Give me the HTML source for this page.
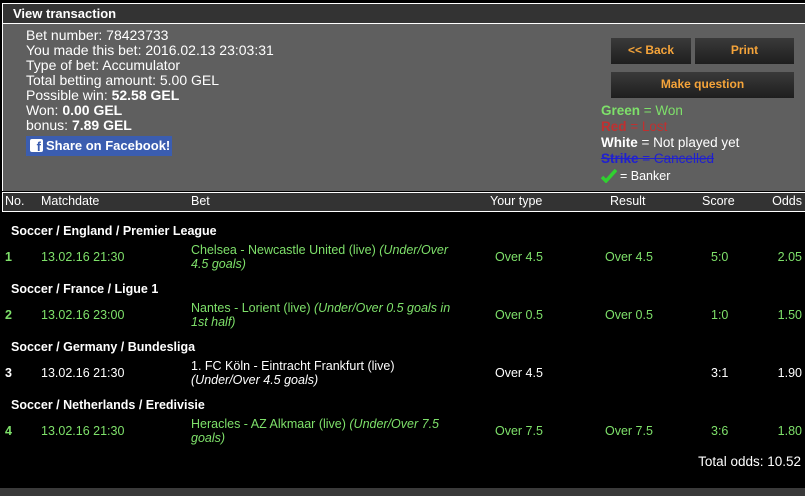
<!DOCTYPE html>
<html><head><style>
*{margin:0;padding:0;box-sizing:border-box}
body{width:805px;height:496px;background:#000;font-family:"Liberation Sans",sans-serif;position:relative;overflow:hidden;color:#fff}
.a{position:absolute;white-space:nowrap}
#title{left:2px;top:3px;width:803px;height:21px;background:#333;border:1px solid #fff;border-right:none;font-weight:bold;font-size:13px;padding:2px 0 0 10px}
#panel{left:2px;top:24px;width:803px;height:167px;background:#5f5f5f;border-left:1px solid #fff}
.info{font-size:14px;color:#fff;line-height:15px}
.btn{position:absolute;background:linear-gradient(#3a3a3a,#1e1e1e);color:#f5a43a;font-weight:bold;font-size:12px;text-align:center;line-height:25px}
#hdr{left:2px;top:192px;width:803px;height:20px;background:#333;border:1px solid #fff;border-right:none}
.h{font-size:12.5px;top:194px}
.sec{font-size:12.5px;font-weight:bold}
.g{color:#7ee06a}
.t{font-size:12.5px}
.lg{font-size:13.5px}
</style></head><body>
<div class="a" id="title">View transaction</div>
<div class="a" id="panel"></div>
<div class="a info" style="left:26px;top:28px">Bet number: 78423733<br>You made this bet: 2016.02.13 23:03:31<br>Type of bet: Accumulator<br>Total betting amount: 5.00 GEL<br>Possible win: <b>52.58 GEL</b><br>Won: <b>0.00 GEL</b><br>bonus: <b>7.89 GEL</b></div>
<div class="a" style="left:26px;top:136px;width:146px;height:20px;background:#3b5db0;font-size:13px;font-weight:bold;line-height:20px;padding-left:20px">Share on Facebook!</div>
<div class="a" style="left:30px;top:139px;width:13px;height:13px;background:#fff;border-radius:2px;color:#3b5db0;font-weight:bold;font-size:13px;line-height:15px;text-align:right;padding-right:2px;overflow:hidden">f</div>
<div class="btn" style="left:611px;top:38px;width:80px;height:26px">&lt;&lt; Back</div>
<div class="btn" style="left:695px;top:38px;width:99px;height:26px">Print</div>
<div class="btn" style="left:611px;top:72px;width:183px;height:26px">Make question</div>
<div class="a lg" style="left:601px;top:103px"><b class="g">Green</b><span class="g"> = Won</span></div>
<div class="a lg" style="left:601px;top:119px;color:#c03030"><b>Red</b> = Lost</div>
<div class="a lg" style="left:601px;top:135px"><b>White</b> = Not played yet</div>
<div class="a lg" style="left:601px;top:151px;color:#2020d0;text-decoration:line-through"><b>Strike</b> = Cancelled</div>
<svg class="a" style="left:601px;top:169px" width="16" height="14"><path d="M1 8 L5 12 L15 1" stroke="#30d030" stroke-width="3.5" fill="none"/></svg>
<div class="a" style="left:620px;top:169px;font-size:12.5px">= Banker</div>
<div class="a" id="hdr"></div>
<div class="a h" style="left:5px">No.</div>
<div class="a h" style="left:41px">Matchdate</div>
<div class="a h" style="left:191px">Bet</div>
<div class="a h" style="left:490px">Your type</div>
<div class="a h" style="left:610px">Result</div>
<div class="a h" style="left:702px">Score</div>
<div class="a h" style="right:3px">Odds</div>

<div class="a sec" style="left:11px;top:224px">Soccer / England / Premier League</div>
<div class="a t g" style="left:5px;top:250px;font-weight:bold">1</div>
<div class="a t g" style="left:41px;top:250px">13.02.16 21:30</div>
<div class="a t g" style="left:191px;top:243px;line-height:14px">Chelsea - Newcastle United (live) <i>(Under/Over<br>4.5 goals)</i></div>
<div class="a t g" style="left:495px;top:250px">Over 4.5</div>
<div class="a t g" style="left:605px;top:250px">Over 4.5</div>
<div class="a t g" style="left:711px;top:250px">5:0</div>
<div class="a t g" style="right:3px;top:250px">2.05</div>

<div class="a sec" style="left:11px;top:282px">Soccer / France / Ligue 1</div>
<div class="a t g" style="left:5px;top:308px;font-weight:bold">2</div>
<div class="a t g" style="left:41px;top:308px">13.02.16 23:00</div>
<div class="a t g" style="left:191px;top:301px;line-height:14px">Nantes - Lorient (live) <i>(Under/Over 0.5 goals in<br>1st half)</i></div>
<div class="a t g" style="left:495px;top:308px">Over 0.5</div>
<div class="a t g" style="left:605px;top:308px">Over 0.5</div>
<div class="a t g" style="left:711px;top:308px">1:0</div>
<div class="a t g" style="right:3px;top:308px">1.50</div>

<div class="a sec" style="left:11px;top:340px">Soccer / Germany / Bundesliga</div>
<div class="a t" style="left:5px;top:366px;font-weight:bold">3</div>
<div class="a t" style="left:41px;top:366px">13.02.16 21:30</div>
<div class="a t" style="left:191px;top:359px;line-height:14px">1. FC Köln - Eintracht Frankfurt (live)<br><i>(Under/Over 4.5 goals)</i></div>
<div class="a t" style="left:495px;top:366px">Over 4.5</div>
<div class="a t" style="left:711px;top:366px">3:1</div>
<div class="a t" style="right:3px;top:366px">1.90</div>

<div class="a sec" style="left:11px;top:398px">Soccer / Netherlands / Eredivisie</div>
<div class="a t g" style="left:5px;top:424px;font-weight:bold">4</div>
<div class="a t g" style="left:41px;top:424px">13.02.16 21:30</div>
<div class="a t g" style="left:191px;top:417px;line-height:14px">Heracles - AZ Alkmaar (live) <i>(Under/Over 7.5<br>goals)</i></div>
<div class="a t g" style="left:495px;top:424px">Over 7.5</div>
<div class="a t g" style="left:605px;top:424px">Over 7.5</div>
<div class="a t g" style="left:711px;top:424px">3:6</div>
<div class="a t g" style="right:3px;top:424px">1.80</div>

<div class="a" style="right:4px;top:454px;font-size:13.5px">Total odds: 10.52</div>
<div class="a" style="left:0;top:488px;width:805px;height:8px;background:#3a3a3a"></div>
</body></html>
